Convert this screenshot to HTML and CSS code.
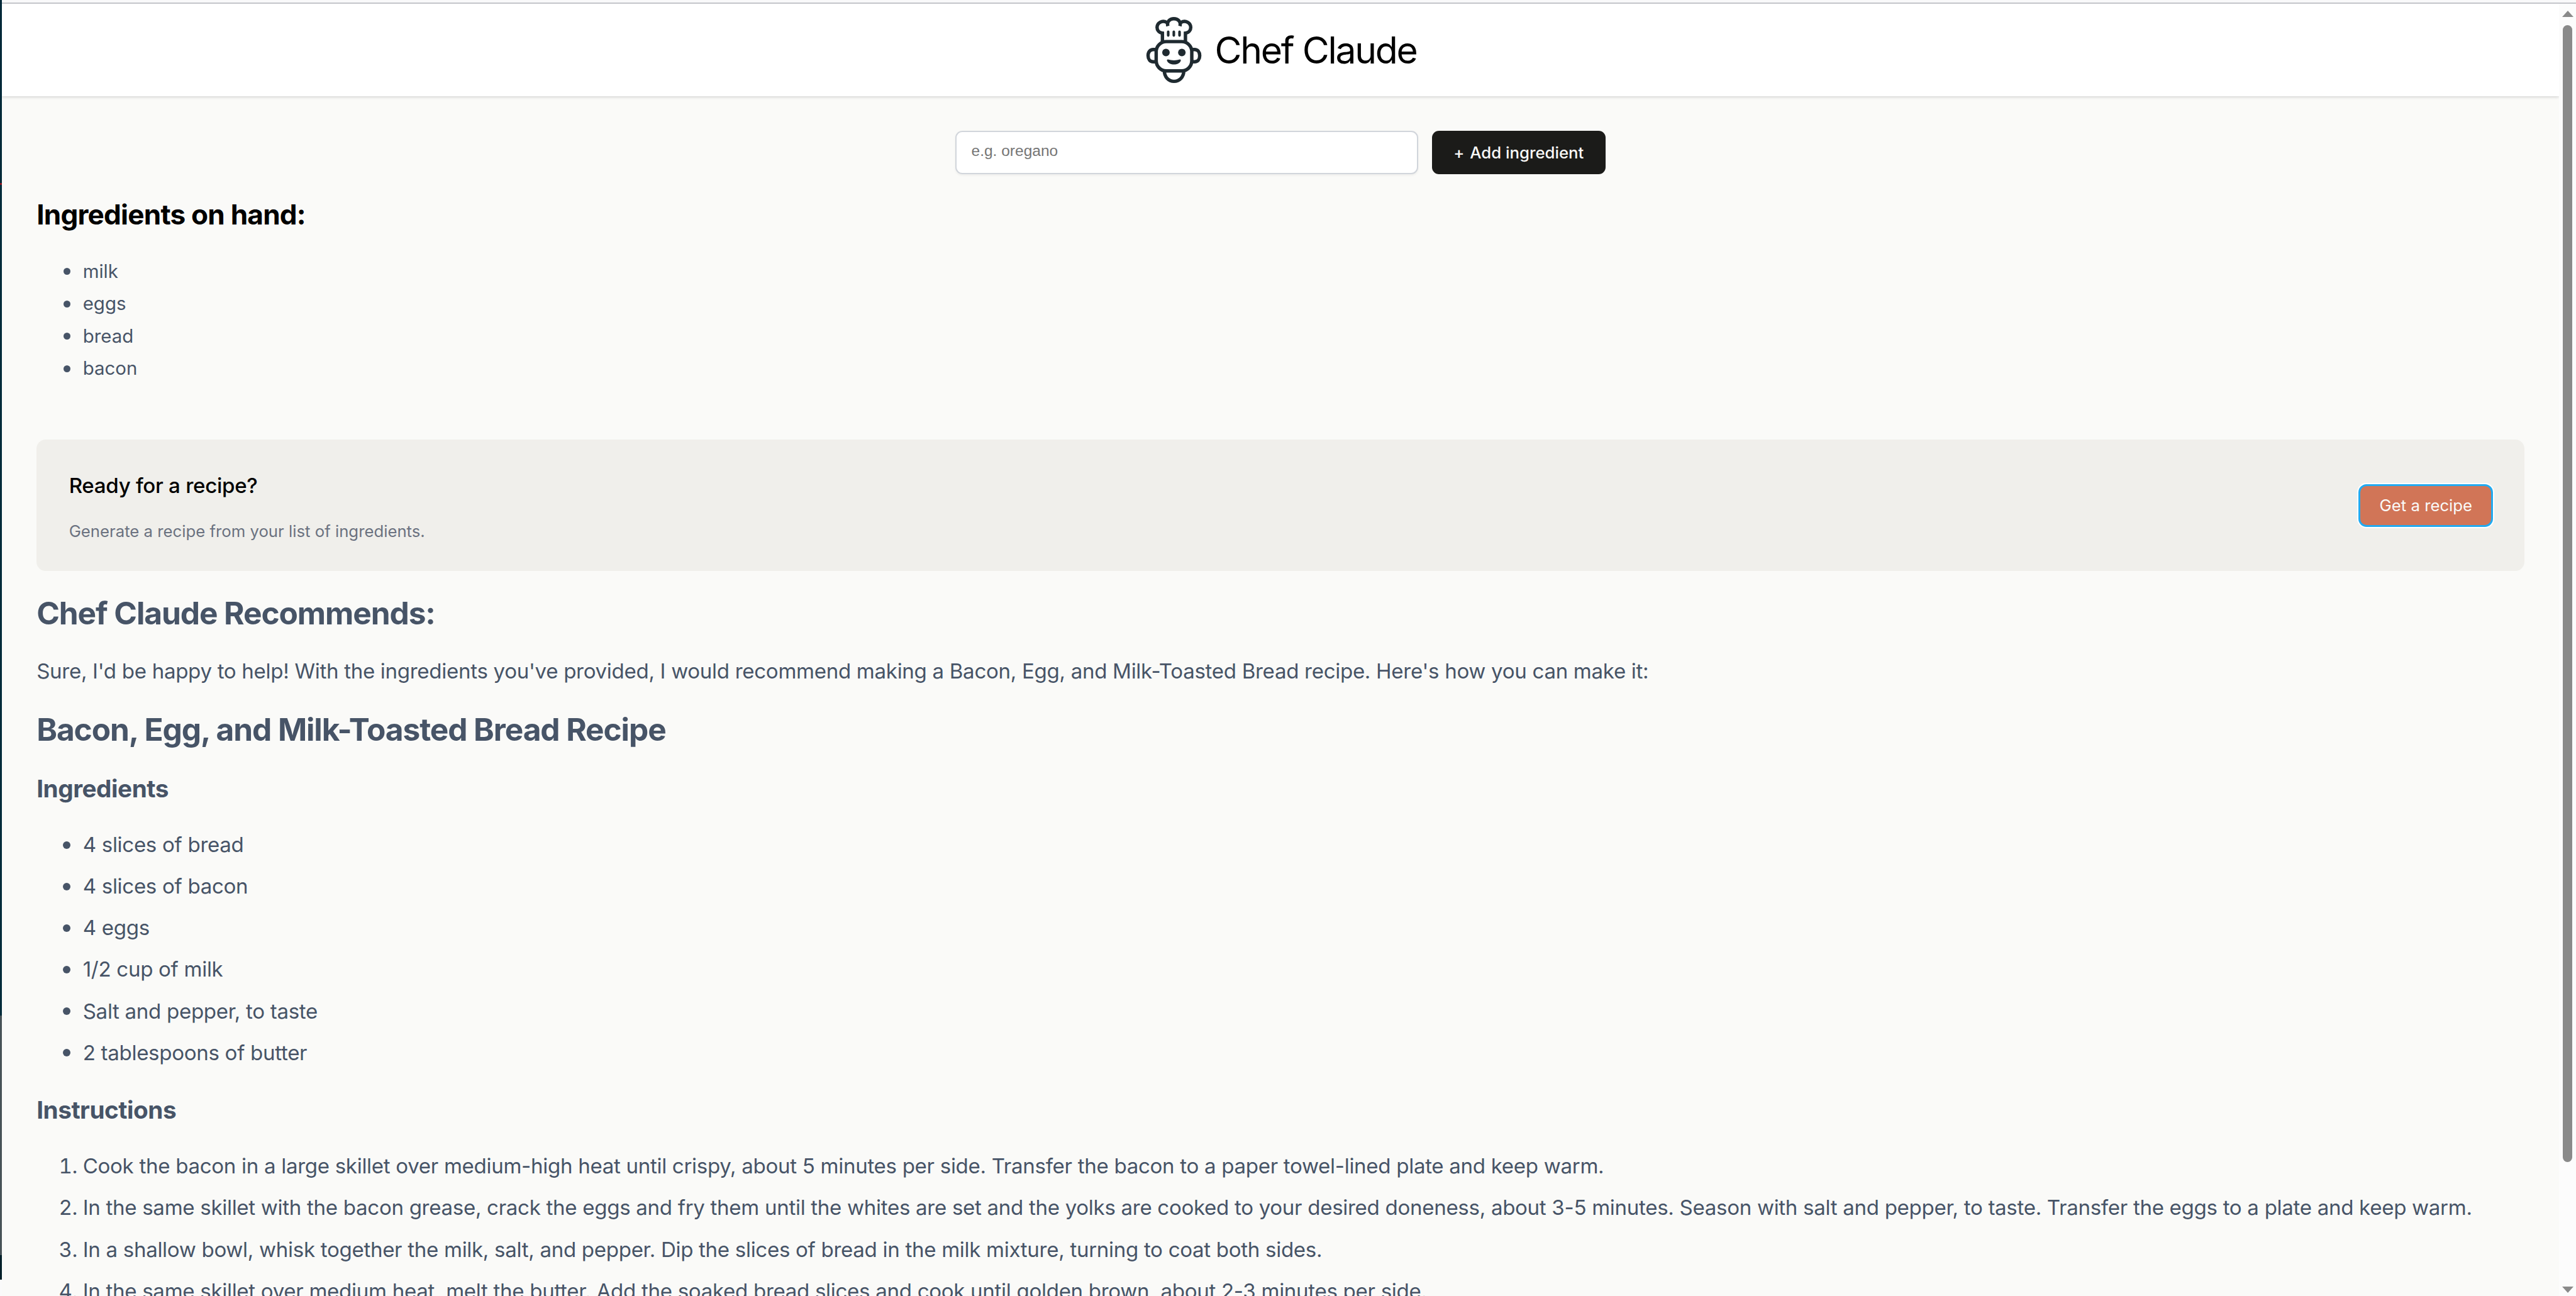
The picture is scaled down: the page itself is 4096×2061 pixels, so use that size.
FILE: index.html
```html
<!DOCTYPE html>
<html lang="en">
<head>
<meta charset="utf-8">
<title>Chef Claude</title>
<link rel="stylesheet" href="styles.css">
</head>
<body>
<div class="left-edge"></div>
<div class="frame">
  <div class="top-edge"></div>
  <div class="window">
    <div class="page">
      <header class="header">
        <svg class="logo" viewBox="0 0 100 120" fill="none" stroke="#1f2a30" stroke-width="5.9" aria-hidden="true">
          <path d="M31.900 45.800V31.200C26 30.500 22.600 26 22.600 21.300C22.600 13.500 31.500 8 39.500 12.800M63.900 12.800C72 8 80.900 13.500 80.900 21.300C80.900 26 77.500 30.500 71.700 31.200V45.800"/>
          <path d="M41.300 19C39 11 45 6.200 51.700 6.200S64.500 11 62.200 19"/>
          <path d="M41.900 29V35.200M51.600 29V35.200M61.500 29V35.200" stroke-width="4.500" stroke-linecap="round"/>
          <rect x="21.100" y="45.800" width="61.600" height="50.700" rx="17.500"/>
          <path d="M20.500 59.600H16C10.500 59.600 7.100 64 7.100 70.200S10.500 80.800 16 80.800H20.500M83.300 59.600H87.500C93 59.600 96.400 64 96.400 70.200S93 80.800 87.500 80.800H83.300"/>
          <path d="M35.300 96.500C35.300 107.500 43 114.600 52 114.600S68.800 107.500 68.800 96.500"/>
          <g fill="#1f2a30" stroke="none">
            <circle cx="38" cy="64.800" r="6.500"/>
            <circle cx="65.500" cy="64.800" r="6.500"/>
            <path d="M41.500 76.800C48 78.800 56 78.800 61.800 76.800C63.500 76.500 64.200 78 63.500 79.500C60.500 87.500 43.500 87.500 40 79.500C39.300 78 40 76.500 41.500 76.800Z"/>
          </g>
        </svg>
        <h1 class="title">Chef Claude</h1>
      </header>
      <main class="main">
        <form class="form">
          <input class="input" type="text" placeholder="e.g. oregano" aria-label="Add ingredient">
          <button class="add" type="button"><span>+</span><span>Add ingredient</span></button>
        </form>
        <section>
          <h2 class="hand">Ingredients on hand:</h2>
          <ul class="list">
            <li>milk</li>
            <li>eggs</li>
            <li>bread</li>
            <li>bacon</li>
          </ul>
          <div class="card">
            <div>
              <h3 class="card-title">Ready for a recipe?</h3>
              <p class="card-text">Generate a recipe from your list of ingredients.</p>
            </div>
            <button class="get" type="button">Get a recipe</button>
          </div>
        </section>
        <section class="recipe">
          <h2>Chef Claude Recommends:</h2>
          <p>Sure, I'd be happy to help! With the ingredients you've provided, I would recommend making a Bacon, Egg, and Milk-Toasted Bread recipe. Here's how you can make it:</p>
          <h2>Bacon, Egg, and Milk-Toasted Bread Recipe</h2>
          <h3>Ingredients</h3>
          <ul>
            <li>4 slices of bread</li>
            <li>4 slices of bacon</li>
            <li>4 eggs</li>
            <li>1/2 cup of milk</li>
            <li>Salt and pepper, to taste</li>
            <li>2 tablespoons of butter</li>
          </ul>
          <h3>Instructions</h3>
          <ol>
            <li>Cook the bacon in a large skillet over medium-high heat until crispy, about 5 minutes per side. Transfer the bacon to a paper towel-lined plate and keep warm.</li>
            <li>In the same skillet with the bacon grease, crack the eggs and fry them until the whites are set and the yolks are cooked to your desired doneness, about 3-5 minutes. Season with salt and pepper, to taste. Transfer the eggs to a plate and keep warm.</li>
            <li>In a shallow bowl, whisk together the milk, salt, and pepper. Dip the slices of bread in the milk mixture, turning to coat both sides.</li>
            <li>In the same skillet over medium heat, melt the butter. Add the soaked bread slices and cook until golden brown, about 2-3 minutes per side.</li>
          </ol>
        </section>
      </main>
    </div>
    <div class="scrollbar">
      <div class="arrow up"></div>
      <div class="thumb"></div>
      <div class="arrow down"></div>
    </div>
  </div>
</div>
</body>
</html>
```
FILE: styles.css
```css
/* 1rem = 16 layout units */
html { font-size: 29.42px; }
* { box-sizing: border-box; }
body {
  margin: 0;
  height: 100vh;
  overflow: hidden;
  display: flex;
  font-family: Inter, sans-serif;
  background: #fafaf8;
  color: #000;
}
/* sliver of the window behind */
.left-edge {
  flex: none;
  width: 3px;
  background: linear-gradient(#002838 291px, #8c1620 291px 294px, #002b3a 294px 1615px, #475257 1615px 1996px, #001f29 1996px 2035px, #fafafa 2035px);
}
.frame { flex: 1; min-width: 0; display: flex; flex-direction: column; }
.top-edge { flex: none; height: 5.5px; background: #f9f9fa; border-bottom: 2px solid #c4c5ca; }
.window { flex: 1; min-height: 0; display: flex; }
.page { flex: 1; min-width: 0; overflow: hidden; }
.header {
  height: 5rem;
  display: flex;
  justify-content: center;
  align-items: center;
  gap: 0.6875rem;
  background: #fff;
  box-shadow: 0 0.0625rem 0.1875rem rgba(0,0,0,.1), 0 0.0625rem 0.125rem rgba(0,0,0,.06);
}
.logo { width: 3.125rem; height: 3.75rem; }
.title { margin: 0; font-weight: 400; font-size: 2rem; letter-spacing: -0.038em; }
.main { padding: 1.875rem 1.875rem 0.625rem; }
.form { display: flex; justify-content: center; gap: 0.75rem; height: 2.36rem; }
.input {
  flex-grow: 1;
  max-width: 25rem;
  border: 2px solid #d1d5db;
  border-radius: 0.375rem;
  padding: 0.45rem 0.8125rem 0.65rem 0.79rem;
  background: #fff;
  font: 0.8333rem "Liberation Sans", sans-serif;
  box-shadow: 0 0.0625rem 0.125rem rgba(0,0,0,.05);
}
.input::placeholder { color: #757575; }
.add {
  display: flex;
  justify-content: center;
  align-items: center;
  gap: 0.3rem;
  width: 9.375rem;
  border: 0;
  border-radius: 0.375rem;
  padding: 0;
  background: #1b1b19;
  color: #fafaf8;
  font: 500 0.875rem Inter, sans-serif;
}
.hand { margin: 1.26rem 0 1.28rem; font-size: 1.5rem; letter-spacing: -0.018em; }
.list { margin: 0 0 2.98rem; padding-left: 2.5rem; color: #475467; line-height: 1.75rem; }
.list li, .recipe ul li { display: flex; align-items: center; }
.list li::before, .recipe ul li::before { content: ""; border-radius: 50%; background: #475467; }
.list li::before { width: 11px; height: 11px; margin: 0 20px 0 -31px; }
.recipe ul li::before { width: 12px; height: 12px; margin: 0 20px 0 -32px; }
.card {
  display: flex;
  justify-content: space-between;
  align-items: center;
  border-radius: 0.5rem;
  padding: 0.625rem 1.75rem;
  background: #f0efeb;
}
.card-title { margin: 1.1rem 0 1.1rem; font-size: 1.125rem; font-weight: 500; line-height: 1.5rem; letter-spacing: -0.0085em; }
.card-text { margin: 0 0 0.9rem; font-size: 0.875rem; line-height: 1.25rem; color: #6b7280; }
.get {
  border: 0;
  border-radius: 0.375rem;
  padding: 0.5625rem 1.0625rem;
  background: #d17557;
  color: #fafaf8;
  font: 400 0.875rem Inter, sans-serif;
  outline: 3px solid #22aaf0;
  outline-offset: -1px;
  box-shadow: 0 0 0 4px #fff;
}
.recipe { color: #475467; font-size: 1.125rem; line-height: 1.75rem; letter-spacing: -0.0094em; }
.recipe h2 { margin: 0.83em 0; font-size: 1.5em; letter-spacing: -0.0222em; }
.recipe h3 { margin: 1em 0; font-size: 1.17em; letter-spacing: -0.0123em; }
.recipe p { margin: 1em 0; }
.recipe ul, .recipe ol { margin: 1em 0; padding-left: 2.5rem; }
.recipe li { margin-bottom: 0.5rem; }
.scrollbar {
  flex: none;
  width: 27px;
  padding: 11px 0 5px;
  display: flex;
  flex-direction: column;
  align-items: center;
  background: #fcfcfc;
}
.arrow { border: 9px solid transparent; border-top: 0; border-bottom: 10px solid #8a8a8a; }
.thumb { width: 15px; height: 1808px; margin: 13px 0 auto; border-radius: 8px; background: #8a8a8a; }
.down { transform: rotate(180deg); }
```
